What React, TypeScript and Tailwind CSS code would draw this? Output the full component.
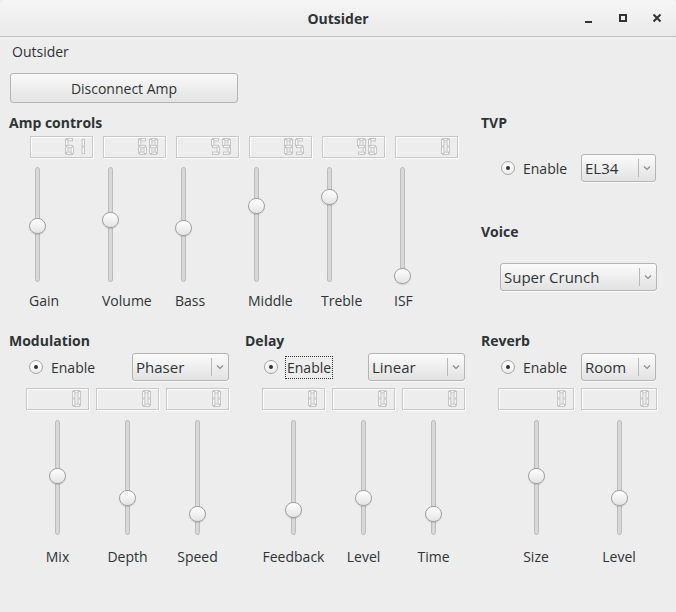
import type { ReactNode } from "react";

const SEGS: Record<string, string> = {
  "0": "abcdef",
  "1": "bc",
  "2": "abged",
  "3": "abgcd",
  "4": "fgbc",
  "5": "afgcd",
  "6": "afgedc",
  "7": "abc",
  "8": "abcdefg",
  "9": "abcdfg",
};

function Digits({ value }: { value: string }) {
  const W = 9;
  const H = 17;
  const t = 2.4;
  const step = 11;
  const rects: Record<string, [number, number, number, number]> = {
    a: [1.5, 0.5, W - 3, t],
    b: [W - 0.5 - t, 1.5, t, H / 2 - 2],
    c: [W - 0.5 - t, H / 2 + 0.5, t, H / 2 - 2],
    d: [1.5, H - 0.5 - t, W - 3, t],
    e: [0.5, H / 2 + 0.5, t, H / 2 - 2],
    f: [0.5, 1.5, t, H / 2 - 2],
    g: [1.5, H / 2 - t / 2, W - 3, t],
  };
  const chars = value.split("");
  const width = chars.length * step - (step - W) + 1;
  return (
    <svg width={width} height={H + 1} viewBox={`0 0 ${width} ${H + 1}`}>
      {chars.map((ch, i) => (
        <g key={i} transform={`translate(${i * step} 0)`}>
          {SEGS[ch].split("").map((s) => {
            const [x, y, w, h] = rects[s];
            return (
              <rect
                key={s}
                x={x}
                y={y}
                width={w}
                height={h}
                fill="#f7f7f7"
                stroke="#c2c2c2"
                strokeWidth={0.9}
              />
            );
          })}
        </g>
      ))}
    </svg>
  );
}

function Lcd({ value, w = "w-[63px]" }: { value: string; w?: string }) {
  return (
    <div
      className={`${w} flex h-[22px] items-center justify-end border border-[#c8c8c8] pr-[6px] shadow-[inset_1px_1px_0_#ffffff,1px_1px_0_#ffffff]`}
    >
      <Digits value={value} />
    </div>
  );
}

function VSlider({ pos }: { pos: number }) {
  return (
    <div className="relative h-[118px] w-[17px]">
      <div className="absolute top-[1px] bottom-[2px] left-[6px] w-[5px] rounded-full border border-[#bcbcbc] bg-[#d8d8d8]" />
      <div
        className="absolute left-0 h-[16px] w-[17px] rounded-full border border-[#a0a0a0] bg-gradient-to-b from-white to-[#e4e4e4] shadow-[0_1px_1px_rgba(0,0,0,0.12)]"
        style={{ top: pos - 8 }}
      />
    </div>
  );
}

function Radio() {
  return (
    <div className="flex h-[14px] w-[14px] items-center justify-center rounded-full border border-[#a3a3a3] bg-gradient-to-b from-white to-[#ececec]">
      <div className="h-[4px] w-[4px] rounded-full bg-[#333333]" />
    </div>
  );
}

function Combo({ label, w }: { label: string; w: string }) {
  return (
    <div
      className={`${w} flex h-[28px] items-center rounded-[3px] border border-[#b4b4b4] bg-gradient-to-b from-[#fbfbfb] to-[#e2e2e2] shadow-[0_1px_0_rgba(255,255,255,0.7)]`}
    >
      <span className="flex-1 truncate pl-[3px] text-[15px] leading-[18px] text-[#2e3436]">
        {label}
      </span>
      <div className="flex h-[18px] w-[17px] items-center justify-center border-l border-[#b8b8b8]">
        <svg width="8" height="6" viewBox="0 0 8 6">
          <path d="M1 1.5 L4 4.5 L7 1.5" fill="none" stroke="#8a8a8a" strokeWidth="1.2" />
        </svg>
      </div>
    </div>
  );
}

function Header({ children }: { children: ReactNode }) {
  return <div className="text-[14px] font-bold leading-[17px] text-[#2e3436]">{children}</div>;
}

function EnableRow({
  rowW,
  pl,
  comboLabel,
  comboW,
  focused,
}: {
  rowW: string;
  pl: string;
  comboLabel: string;
  comboW: string;
  focused?: boolean;
}) {
  return (
    <div className={`${pl} flex`}>
      <div className={`${rowW} flex items-center`}>
        <Radio />
        {focused ? (
          <span className="ml-[7px] border border-dotted border-[#333333] px-[1px] text-[14px] leading-[21px] text-[#2e3436]">
            Enable
          </span>
        ) : (
          <span className="ml-[8px] text-[14px] leading-[17px] text-[#2e3436]">Enable</span>
        )}
        <div className="ml-auto">
          <Combo label={comboLabel} w={comboW} />
        </div>
      </div>
    </div>
  );
}

type Knob = { label: string; value: string; pos: number };

const amp: Knob[] = [
  { label: "Gain", value: "61", pos: 60 },
  { label: "Volume", value: "68", pos: 54 },
  { label: "Bass", value: "59", pos: 62 },
  { label: "Middle", value: "85", pos: 40 },
  { label: "Treble", value: "96", pos: 31 },
  { label: "ISF", value: "0", pos: 110 },
];

const modulation: Knob[] = [
  { label: "Mix", value: "0", pos: 57 },
  { label: "Depth", value: "0", pos: 79 },
  { label: "Speed", value: "0", pos: 95 },
];

const delay: Knob[] = [
  { label: "Feedback", value: "0", pos: 91 },
  { label: "Level", value: "0", pos: 79 },
  { label: "Time", value: "0", pos: 95 },
];

const reverb: Knob[] = [
  { label: "Size", value: "0", pos: 57 },
  { label: "Level", value: "0", pos: 79 },
];

function EffectKnobs({ knobs, lcdW }: { knobs: Knob[]; lcdW: string }) {
  return (
    <div className="mt-[7px] flex gap-[7px] pl-[17px]">
      {knobs.map((k) => (
        <div key={k.label + k.value + k.pos} className="flex flex-col items-center">
          <Lcd value={k.value} w={lcdW} />
          <div className="mt-[9px]">
            <VSlider pos={k.pos} />
          </div>
          <div className="mt-[11px] text-[14px] leading-[17px] text-[#2e3436]">{k.label}</div>
        </div>
      ))}
    </div>
  );
}

function TitleBar() {
  return (
    <div className="grid h-[37px] grid-cols-[1fr_auto_1fr] items-center rounded-t-[5px] border-b border-[#bfbfbf] bg-gradient-to-b from-[#f6f6f6] to-[#e9e9e9]">
      <div />
      <div className="text-[14px] font-bold text-[#2e3436]">Outsider</div>
      <div className="flex items-center justify-end gap-[18px] pr-[11px]">
        <svg width="16" height="16" viewBox="0 0 16 16">
          <path d="M4 12 H11" stroke="#2e3436" strokeWidth="2" />
        </svg>
        <svg width="16" height="16" viewBox="0 0 16 16">
          <rect x="5" y="5" width="6" height="6" fill="none" stroke="#2e3436" strokeWidth="2" />
        </svg>
        <svg width="16" height="16" viewBox="0 0 16 16">
          <path d="M4.5 4.5 L11.5 11.5 M11.5 4.5 L4.5 11.5" stroke="#2e3436" strokeWidth="2" />
        </svg>
      </div>
    </div>
  );
}

export default function App() {
  return (
    <div className="h-[612px] w-[676px] overflow-hidden bg-[#ededed] font-['Open_Sans',sans-serif] text-[#2e3436]">
      <TitleBar />

      <div className="mt-[6px] pl-[12px] text-[14px] leading-[17px]">Outsider</div>

      <div className="mt-[13px] pl-[10px]">
        <button
          type="button"
          className="h-[30px] w-[228px] rounded-[3px] border border-[#b4b4b4] bg-gradient-to-b from-[#f9f9f9] to-[#e3e3e3] text-[14px] text-[#2e3436]"
        >
          Disconnect Amp
        </button>
      </div>

      <div className="mt-[11px] grid grid-cols-[472px_1fr] pl-[9px]">
        <div>
          <Header>Amp controls</Header>
          <div className="mt-[5px] flex gap-[10px] pl-[21px]">
            {amp.map((k) => (
              <div key={k.label} className="flex w-[63px] flex-col">
                <Lcd value={k.value} />
                <div className="mt-[8px] -ml-[1px]">
                  <VSlider pos={k.pos} />
                </div>
                <div className="mt-[8px] -ml-[1px] text-[14px] leading-[17px]">{k.label}</div>
              </div>
            ))}
          </div>
        </div>

        <div>
          <Header>TVP</Header>
          <div className="mt-[23px]">
            <EnableRow pl="pl-[20px]" rowW="w-[155px]" comboLabel="EL34" comboW="w-[75px]" />
          </div>
          <div className="mt-[41px]">
            <Header>Voice</Header>
          </div>
          <div className="mt-[23px] pl-[19px]">
            <Combo label="Super Crunch" w="w-[157px]" />
          </div>
        </div>
      </div>

      <div className="mt-[23px] grid grid-cols-[236px_236px_1fr] pl-[9px]">
        <div>
          <Header>Modulation</Header>
          <div className="mt-[4px]">
            <EnableRow pl="pl-[20px]" rowW="w-[200px]" comboLabel="Phaser" comboW="w-[97px]" />
          </div>
          <EffectKnobs knobs={modulation} lcdW="w-[63px]" />
        </div>
        <div>
          <Header>Delay</Header>
          <div className="mt-[4px]">
            <EnableRow
              pl="pl-[19px]"
              rowW="w-[201px]"
              comboLabel="Linear"
              comboW="w-[97px]"
              focused
            />
          </div>
          <EffectKnobs knobs={delay} lcdW="w-[63px]" />
        </div>
        <div>
          <Header>Reverb</Header>
          <div className="mt-[4px]">
            <EnableRow pl="pl-[20px]" rowW="w-[155px]" comboLabel="Room" comboW="w-[75px]" />
          </div>
          <EffectKnobs knobs={reverb} lcdW="w-[76px]" />
        </div>
      </div>
    </div>
  );
}
